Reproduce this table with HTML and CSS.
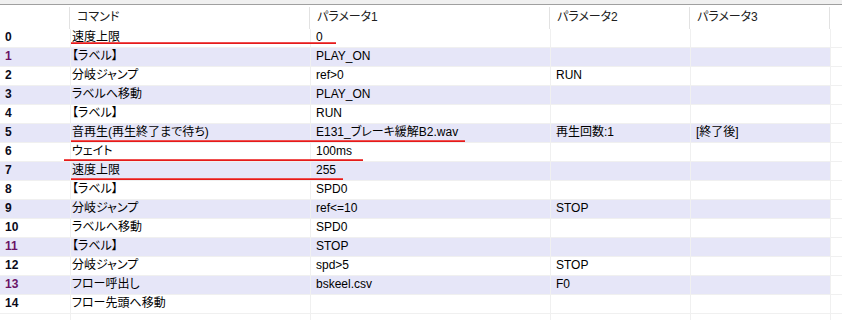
FILE: index.html
```html
<!DOCTYPE html>
<html lang="ja">
<head>
<meta charset="utf-8">
<link rel="stylesheet" href="styles.css">
</head>
<body>
<div class="grid">
  <div class="topbar"></div>
  <div class="head">
    <div class="hc"></div>
    <div class="hc">コマンド</div>
    <div class="hc">パラメータ1</div>
    <div class="hc">パラメータ2</div>
    <div class="hc">パラメータ3</div>
    <div class="hc"></div>
  </div>
  <div class="row"><div class="c n">0</div><div class="c cmd">速度上限</div><div class="c p">0</div><div class="c p"></div><div class="c p"></div><div class="c e"></div></div>
  <div class="row alt"><div class="c n purple">1</div><div class="c cmd">【ラベル】</div><div class="c p">PLAY_ON</div><div class="c p"></div><div class="c p"></div><div class="c e"></div></div>
  <div class="row"><div class="c n">2</div><div class="c cmd">分岐ジャンプ</div><div class="c p">ref&gt;0</div><div class="c p">RUN</div><div class="c p"></div><div class="c e"></div></div>
  <div class="row alt"><div class="c n">3</div><div class="c cmd">ラベルへ移動</div><div class="c p">PLAY_ON</div><div class="c p"></div><div class="c p"></div><div class="c e"></div></div>
  <div class="row"><div class="c n">4</div><div class="c cmd">【ラベル】</div><div class="c p">RUN</div><div class="c p"></div><div class="c p"></div><div class="c e"></div></div>
  <div class="row alt"><div class="c n">5</div><div class="c cmd">音再生(再生終了まで待ち)</div><div class="c p">E131_ブレーキ緩解B2.wav</div><div class="c p">再生回数:1</div><div class="c p">[終了後]</div><div class="c e"></div></div>
  <div class="row"><div class="c n">6</div><div class="c cmd">ウェイト</div><div class="c p">100ms</div><div class="c p"></div><div class="c p"></div><div class="c e"></div></div>
  <div class="row alt"><div class="c n">7</div><div class="c cmd">速度上限</div><div class="c p">255</div><div class="c p"></div><div class="c p"></div><div class="c e"></div></div>
  <div class="row"><div class="c n">8</div><div class="c cmd">【ラベル】</div><div class="c p">SPD0</div><div class="c p"></div><div class="c p"></div><div class="c e"></div></div>
  <div class="row alt"><div class="c n">9</div><div class="c cmd">分岐ジャンプ</div><div class="c p">ref&lt;=10</div><div class="c p">STOP</div><div class="c p"></div><div class="c e"></div></div>
  <div class="row"><div class="c n">10</div><div class="c cmd">ラベルへ移動</div><div class="c p">SPD0</div><div class="c p"></div><div class="c p"></div><div class="c e"></div></div>
  <div class="row alt"><div class="c n purple">11</div><div class="c cmd">【ラベル】</div><div class="c p">STOP</div><div class="c p"></div><div class="c p"></div><div class="c e"></div></div>
  <div class="row"><div class="c n">12</div><div class="c cmd">分岐ジャンプ</div><div class="c p">spd&gt;5</div><div class="c p">STOP</div><div class="c p"></div><div class="c e"></div></div>
  <div class="row alt"><div class="c n purple">13</div><div class="c cmd">フロー呼出し</div><div class="c p">bskeel.csv</div><div class="c p">F0</div><div class="c p"></div><div class="c e"></div></div>
  <div class="row"><div class="c n">14</div><div class="c cmd">フロー先頭へ移動</div><div class="c p"></div><div class="c p"></div><div class="c p"></div><div class="c e"></div></div>
  <div class="row"><div class="c n"></div><div class="c cmd"></div><div class="c p"></div><div class="c p"></div><div class="c p"></div><div class="c e"></div></div>

  <div class="mark m0"></div>
  <div class="mark m5"></div>
  <div class="mark m6"></div>
  <div class="mark m7"></div>
</div>
</body>
</html>
```

FILE: styles.css
```css
html, body {
  margin: 0;
  padding: 0;
  background: #ffffff;
  overflow: hidden;
}

.grid {
  position: relative;
  width: 842px;
  height: 320px;
  overflow: hidden;
  font-family: "Liberation Sans", "Noto Sans CJK JP", sans-serif;
  font-size: 12px;
  font-feature-settings: "palt";
  color: #000;
}

.topbar {
  height: 4px;
  background: #f0f0f0;
  border-bottom: 1px solid #a0a0a0;
}

.head {
  display: grid;
  grid-template-columns: 69px 240px 240px 140px 140px 13px;
  height: 24px;
  background: #fff;
}

.hc {
  box-sizing: border-box;
  margin-top: 2px;
  padding: 3px 0 0 7px;
  line-height: 14px;
  color: #202020;
  white-space: nowrap;
}

.hc + .hc {
  border-left: 1px solid #e2e2e2;
}

.row {
  display: grid;
  grid-template-columns: 70px 240px 240px 140px 140px 12px;
  height: 19px;
  box-sizing: border-box;
  border-bottom: 1px solid #f0f0f0;
}

.c {
  box-sizing: border-box;
  padding-top: 1px;
  line-height: 14px;
  white-space: nowrap;
  overflow: hidden;
}

.c + .c {
  border-left: 1px solid #f0f0f0;
}

.alt .n,
.alt .cmd,
.alt .p {
  background: #e6e6f8;
}

.n {
  padding-left: 5px;
  font-weight: bold;
  color: #0a0a1a;
}

.n.purple {
  color: #6a1466;
}

.cmd {
  padding-left: 1px;
}

.p {
  padding-left: 5px;
}

.mark {
  position: absolute;
  height: 2px;
  background: linear-gradient(#f46a6a, #e00000);
}

.m0 { left: 71px; top: 42px; width: 265px; }
.m5 { left: 71px; top: 140px; width: 394px; }
.m6 { left: 64px; top: 159px; width: 299px; }
.m7 { left: 71px; top: 178px; width: 272px; }
```
